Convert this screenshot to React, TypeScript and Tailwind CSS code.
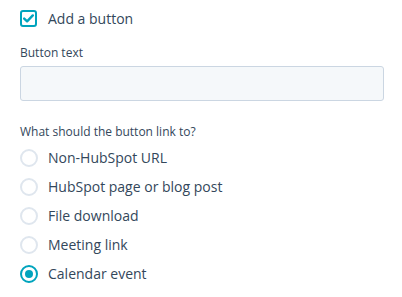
import { useState } from "react";

const options = [
  "Non-HubSpot URL",
  "HubSpot page or blog post",
  "File download",
  "Meeting link",
  "Calendar event",
];

export default function App() {
  const [selected, setSelected] = useState(4);
  const [checked, setChecked] = useState(true);

  return (
    <div className="w-[402px] h-[297px] bg-white pl-5 pr-[18px] pt-[10px] font-['Open_Sans',sans-serif] text-[#33475b] overflow-hidden">
      {/* Add a button */}
      <label className="flex items-center h-[17px] cursor-pointer" onClick={() => setChecked(!checked)}>
        <span className="w-[17px] h-[17px] rounded-[3px] border-2 border-[#00a4bd] bg-white flex items-center justify-center">
          {checked && (
            <svg width="11" height="9" viewBox="0 0 11 9" fill="none">
              <path d="M1.2 4.6 L4.1 7.3 L9.8 1.4" stroke="#00a4bd" strokeWidth="2.4" strokeLinecap="round" strokeLinejoin="round" />
            </svg>
          )}
        </span>
        <span className="ml-[11px] text-[14px] leading-[17px]">Add a button</span>
      </label>

      {/* Button text */}
      <div className="mt-[19px] text-[12px] leading-[14px] font-medium">Button text</div>
      <input
        className="mt-[6px] block w-full h-[35px] rounded-[3px] border border-[#cbd6e2] bg-[#f5f8fa] outline-none px-3 text-[14px]"
        type="text"
      />

      {/* Link target */}
      <div className="mt-[24px] text-[12px] leading-[14px] font-medium">What should the button link to?</div>
      <div className="mt-[10px] flex flex-col gap-[11px]">
        {options.map((opt, i) => (
          <label key={opt} className="flex items-center h-[18px] cursor-pointer" onClick={() => setSelected(i)}>
            <span
              className={
                i === selected
                  ? "w-[18px] h-[18px] rounded-full border-2 border-[#00a4bd] bg-white flex items-center justify-center"
                  : "w-[18px] h-[18px] rounded-full border-2 border-[#dfe6ee] bg-white flex items-center justify-center"
              }
            >
              {i === selected && <span className="w-[8px] h-[8px] rounded-full bg-[#00a4bd]" />}
            </span>
            <span className="ml-[10px] text-[14px] leading-[18px]">{opt}</span>
          </label>
        ))}
      </div>
    </div>
  );
}
